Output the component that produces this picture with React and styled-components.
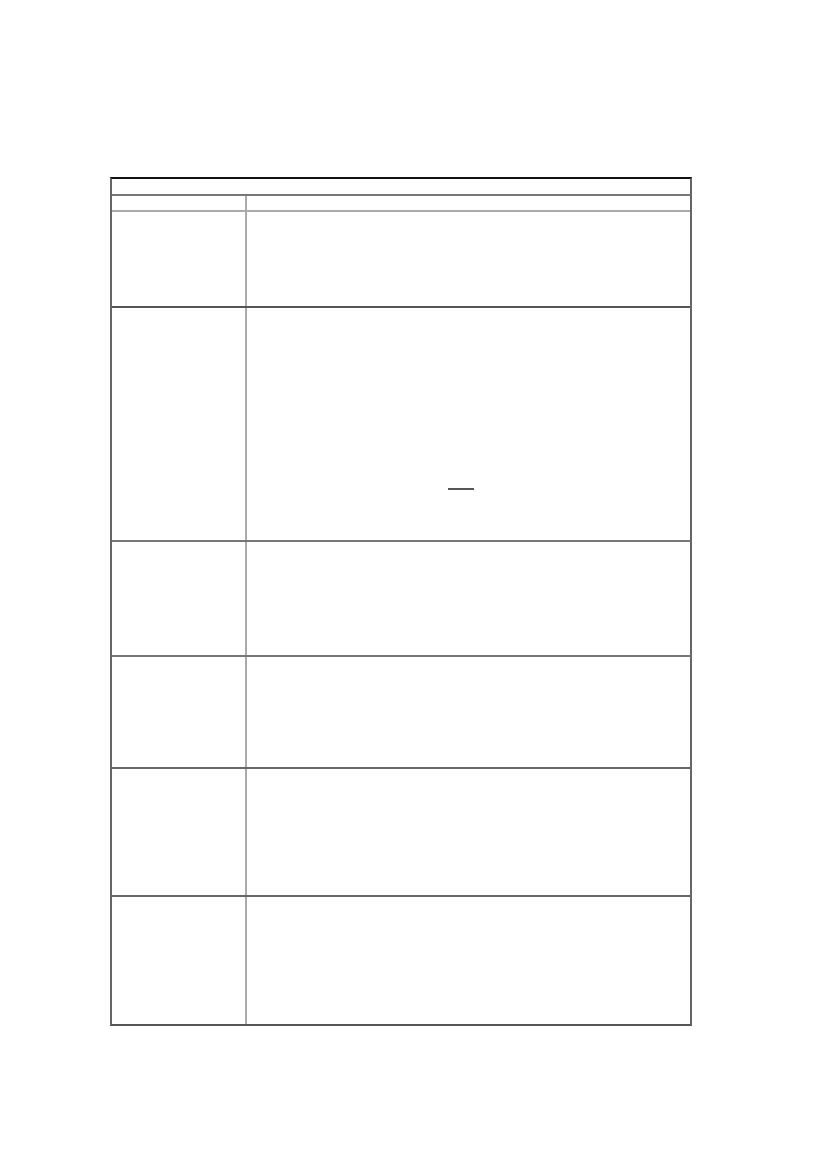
import React from 'react';
import styled, { createGlobalStyle } from 'styled-components';

const GlobalStyle = createGlobalStyle`
  body {
    margin: 0;
    background: #fff;
    font-family: "Liberation Serif", serif;
  }
`;

const Page = styled.div`
  width: 827px;
  height: 1169px;
  padding-top: 177px;
  padding-left: 110px;
  box-sizing: border-box;
`;

const Table = styled.div`
  width: 582px;
  border-top: 2px solid #111;
  border-left: 2px solid #666;
  border-right: 2px solid #666;
  border-bottom: 2px solid #555;
  box-sizing: border-box;
  display: flex;
  flex-direction: column;
`;

const TitleRow = styled.div`
  height: 15px;
  border-bottom: 2px solid #777;
`;

const Row = styled.div`
  display: grid;
  grid-template-columns: 135px 1fr;
  height: ${(p) => p.h}px;
  box-sizing: border-box;
  border-bottom: ${(p) => (p.last ? 'none' : `2px solid ${p.line}`)};
`;

const Label = styled.div`
  border-right: 2px solid #aaa;
`;

const Body = styled.div`
  padding-top: ${(p) => p.blankTop || 0}px;
`;

const Blank = styled.span`
  display: block;
  width: 26px;
  margin-left: 201px;
  border-bottom: 2px solid #555;
`;

const rows = [
  { h: 16, line: '#aaa' },
  { h: 96, line: '#555' },
  { h: 234, line: '#777', blank: 180 },
  { h: 115, line: '#777' },
  { h: 112, line: '#666' },
  { h: 128, line: '#666' },
  { h: 127, line: '#555', last: true },
];

const App = () => {
  return (
    <>
      <GlobalStyle />
      <Page>
        <Table>
          <TitleRow />
          {rows.map((r, i) => (
            <Row key={i} h={r.h} line={r.line} last={r.last}>
              <Label />
              <Body blankTop={r.blank}>{r.blank && <Blank />}</Body>
            </Row>
          ))}
        </Table>
      </Page>
    </>
  );
};

export default App;
